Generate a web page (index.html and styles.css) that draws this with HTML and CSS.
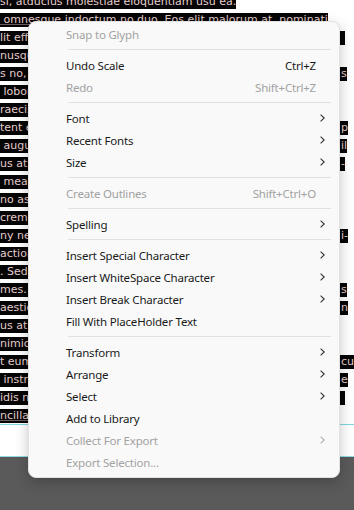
FILE: index.html
```html
<!DOCTYPE html>
<html lang="en">
<head>
    <meta charset="UTF-8">
    <meta name="viewport" content="width=device-width, initial-scale=1.0">
    <title>Context Menu</title>
    <link rel="stylesheet" href="styles.css">
</head>
<body>
    <div class="screen">
        <!-- Document page with selected text -->
        <div class="page">
            <div class="line">si, atducius molestiae eloquentiam usu ea.</div>
            <div class="line link">&nbsp;omnesque indoctum no duo. Eos elit malorum at, nominati</div>
            <div class="line"><span class="lead">lit efficiendi mei ex, vis te natum</span><span class="tail">&nbsp;</span></div>
            <div class="line">nusquam vituperatoribus ne eum</div>
            <div class="line"><span class="lead">s no, ut per consul delenit</span><span>s</span></div>
            <div class="line">&nbsp;lobortis scriptorem an sea</div>
            <div class="line">raecis pertinacia his id</div>
            <div class="line"><span class="lead">tent elaboraret ius eu, eam</span><span>p</span></div>
            <div class="line"><span class="lead">&nbsp;augue appetere eu, mel an</span><span>il</span></div>
            <div class="line"><span class="lead">us at vim graecis vituperata</span><span>-</span></div>
            <div class="line">&nbsp;mea facer quodsi id</div>
            <div class="line">no assum vocent ei, sea</div>
            <div class="line">crementum ius ad, mel</div>
            <div class="line"><span class="lead">ny nemore dolorum ius ne, ut</span><span>i-</span></div>
            <div class="line">actiones neglegentur</div>
            <div class="line">. Sed oratio feugiat</div>
            <div class="line"><span class="lead">mes. Ad mea expetenda</span><span>s</span></div>
            <div class="line"><span class="lead">aestio sit dicunt vivendum</span><span>n</span></div>
            <div class="line">us at. Vix ut tale</div>
            <div class="line">nimicus vis iusto</div>
            <div class="line"><span class="lead">t eum viris platonem</span><span>cu</span></div>
            <div class="line"><span class="lead">&nbsp;instructior no his</span><span>e</span></div>
            <div class="line"><span class="lead">idis nostro cum ut</span><span class="tail">&nbsp;</span></div>
            <div class="line link last">ncillae ullamcorper</div>
            <div class="frame-edge"></div>
        </div>
        <div class="pasteboard"></div>

        <!-- Context menu -->
        <div class="menu">
            <div class="item disabled"><span class="label">Snap to Glyph</span></div>
            <div class="sep"></div>
            <div class="item"><span class="label">Undo Scale</span><span class="key">Ctrl+Z</span><span class="arrow"></span></div>
            <div class="item disabled"><span class="label">Redo</span><span class="key">Shift+Ctrl+Z</span><span class="arrow"></span></div>
            <div class="sep"></div>
            <div class="item"><span class="label">Font</span><span class="arrow"><svg viewBox="0 0 5 8"><path d="M0.6 0.6 L4.2 4 L0.6 7.4"/></svg></span></div>
            <div class="item"><span class="label">Recent Fonts</span><span class="arrow"><svg viewBox="0 0 5 8"><path d="M0.6 0.6 L4.2 4 L0.6 7.4"/></svg></span></div>
            <div class="item"><span class="label">Size</span><span class="arrow"><svg viewBox="0 0 5 8"><path d="M0.6 0.6 L4.2 4 L0.6 7.4"/></svg></span></div>
            <div class="sep"></div>
            <div class="item disabled"><span class="label">Create Outlines</span><span class="key">Shift+Ctrl+O</span><span class="arrow"></span></div>
            <div class="sep"></div>
            <div class="item"><span class="label">Spelling</span><span class="arrow"><svg viewBox="0 0 5 8"><path d="M0.6 0.6 L4.2 4 L0.6 7.4"/></svg></span></div>
            <div class="sep"></div>
            <div class="item"><span class="label">Insert Special Character</span><span class="arrow"><svg viewBox="0 0 5 8"><path d="M0.6 0.6 L4.2 4 L0.6 7.4"/></svg></span></div>
            <div class="item"><span class="label">Insert WhiteSpace Character</span><span class="arrow"><svg viewBox="0 0 5 8"><path d="M0.6 0.6 L4.2 4 L0.6 7.4"/></svg></span></div>
            <div class="item"><span class="label">Insert Break Character</span><span class="arrow"><svg viewBox="0 0 5 8"><path d="M0.6 0.6 L4.2 4 L0.6 7.4"/></svg></span></div>
            <div class="item"><span class="label">Fill With PlaceHolder Text</span></div>
            <div class="sep"></div>
            <div class="item"><span class="label">Transform</span><span class="arrow"><svg viewBox="0 0 5 8"><path d="M0.6 0.6 L4.2 4 L0.6 7.4"/></svg></span></div>
            <div class="item"><span class="label">Arrange</span><span class="arrow"><svg viewBox="0 0 5 8"><path d="M0.6 0.6 L4.2 4 L0.6 7.4"/></svg></span></div>
            <div class="item"><span class="label">Select</span><span class="arrow"><svg viewBox="0 0 5 8"><path d="M0.6 0.6 L4.2 4 L0.6 7.4"/></svg></span></div>
            <div class="item"><span class="label">Add to Library</span></div>
            <div class="item disabled"><span class="label">Collect For Export</span><span class="arrow"><svg viewBox="0 0 5 8"><path d="M0.6 0.6 L4.2 4 L0.6 7.4"/></svg></span></div>
            <div class="item disabled"><span class="label">Export Selection...</span></div>
        </div>
    </div>
</body>
</html>
```

FILE: styles.css
```css
/* Reset */
* {
    box-sizing: border-box;
    margin: 0;
    padding: 0;
}

body {
    width: 354px;
    height: 510px;
    overflow: hidden;
    background: #5a5a5a;
}

.screen {
    position: relative;
    width: 354px;
    height: 510px;
    display: flex;
    flex-direction: column;
}

/* Document page */
.page {
    background: #fff;
    height: 462px;
    margin-top: -5px;
    border-bottom: 1px solid #8fdde0;
    font-family: "DejaVu Sans", sans-serif;
    font-size: 11px;
    line-height: 14px;
    color: #e6cdcd;
    overflow: hidden;
}

.line {
    display: flex;
    width: fit-content;
    height: 14px;
    margin-bottom: 4px;
    background: #050505;
    white-space: nowrap;
}

.line.link {
    text-decoration: underline;
    text-decoration-color: #6a5a5a;
}

.line.last {
    margin-bottom: 0;
}

.frame-edge {
    height: 1px;
    margin-top: 1px;
    background: #7fd8dc;
}

.lead {
    width: 341px;
    overflow: hidden;
}

.tail {
    width: 4px;
}

.pasteboard {
    flex: 1;
    background: #5a5a5a;
}

/* Context menu */
.menu {
    position: absolute;
    left: 28px;
    top: 21px;
    width: 312px;
    padding: 1px 0 4px;
    background: #f9f9f9;
    border: 1px solid #e2e2e2;
    border-radius: 8px;
    box-shadow: 0 4px 14px rgba(0, 0, 0, 0.22);
    font-family: "Noto Sans", sans-serif;
    font-size: 11.5px;
    letter-spacing: -0.2px;
    color: #1a1a1a;
}

.item {
    display: flex;
    align-items: center;
    height: 22px;
    padding: 0 11px 0 37px;
}

.item .label {
    flex: 1;
}

.item .arrow {
    width: 12px;
    display: flex;
    justify-content: center;
    align-items: center;
}

.item .arrow svg {
    width: 5px;
    height: 8px;
    fill: none;
    stroke: #333;
    stroke-width: 1.1;
}

.item.disabled {
    color: #a2a2a2;
}

.item.disabled .arrow svg {
    stroke: #b0b0b0;
}

.sep {
    height: 1px;
    margin: 4px 8px 4px 39px;
    background: #e1e1e1;
}
```
